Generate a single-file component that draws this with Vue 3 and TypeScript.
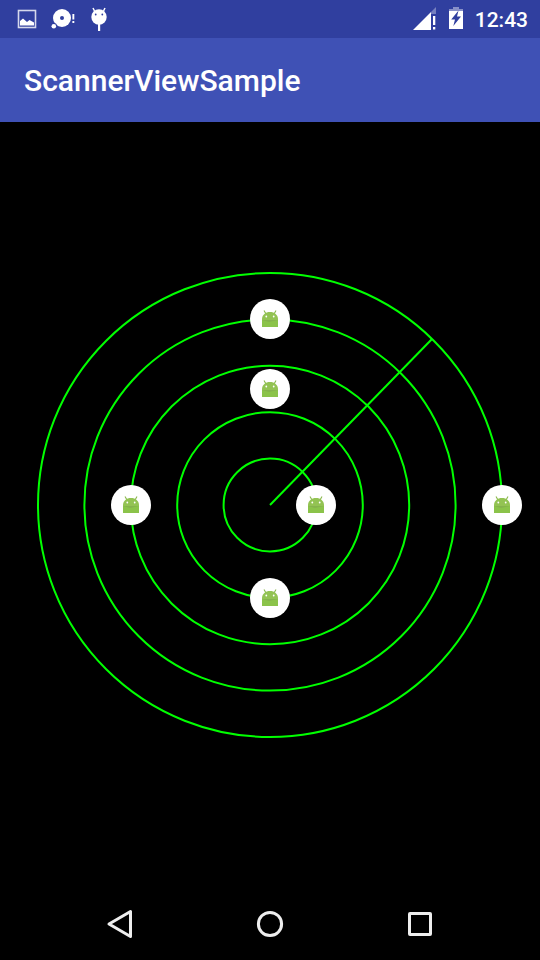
<script setup lang="ts">
interface Marker {
  x: number
  y: number
}

const center = 270
const maxRadius = 232
const ringCount = 5

const rings: number[] = Array.from({ length: ringCount }, (_, i) => (maxRadius * (i + 1)) / ringCount)

const markers: Marker[] = [
  { x: 270, y: 84 },
  { x: 270, y: 154 },
  { x: 131, y: 270 },
  { x: 316, y: 270 },
  { x: 502, y: 270 },
  { x: 270, y: 363 },
]
</script>

<template>
  <div class="screen">
    <div class="status">
      <div class="notifications">
        <svg width="20" height="20" viewBox="0 0 20 20" aria-hidden="true">
          <rect x="1.5" y="1.5" width="17" height="17" fill="none" stroke="#d5d8ec" stroke-width="1.6" />
          <path d="M3 16.500V12l3-2.500 4 3.500 2.500-2 4.500 2.500v3z" fill="#fff" />
        </svg>
        <svg width="24" height="20" viewBox="0 0 24 20" aria-hidden="true">
          <circle cx="11" cy="9" r="9" fill="#fff" />
          <circle cx="11" cy="9" r="2" fill="#303f9f" />
          <circle cx="2.8" cy="17.2" r="3.2" fill="#303f9f" />
          <circle cx="2.8" cy="17.2" r="2.3" fill="#fff" />
          <path d="M21.4 5h1.9v5.500h-1.900zM21.400 12h1.900v2h-1.900z" fill="#fff" />
        </svg>
        <svg width="20" height="24" viewBox="-1 0 20 24" aria-hidden="true">
          <path d="M4.500 4 3 1M13.500 4 15 1" fill="none" stroke="#fff" stroke-width="1.500" />
          <path d="M8 16h2.200v8H8z" fill="#fff" />
          <circle cx="9" cy="10" r="7.700" fill="#fff" />
          <circle cx="5.700" cy="7.500" r="0.900" fill="#303f9f" />
          <circle cx="12.300" cy="7.500" r="0.900" fill="#303f9f" />
        </svg>
      </div>
      <div class="system">
        <svg width="24" height="24" viewBox="0 0 24 24" aria-hidden="true">
          <path d="M23 0v7h-5V5z" fill="#7680bf" />
          <path d="M0 23 18 5v18z" fill="#fff" />
          <path d="M20 9h2.300v9H20zM20 20h2.300v2.500H20z" fill="#fff" />
        </svg>
        <svg width="16" height="24" viewBox="0 0 16 24" aria-hidden="true">
          <path d="M1 4V2h4V0h6v2h4v2z" fill="#8890c8" />
          <path d="M1 4h14v18H1z" fill="#fff" />
          <path d="M10.500 3.500 3.200 12.500h3.800L5.300 19 13 9.500H9z" fill="#303f9f" />
        </svg>
        <time>12:43</time>
      </div>
    </div>

    <header class="toolbar">
      <h1>ScannerViewSample</h1>
    </header>

    <main class="scanner">
      <svg class="radar" viewBox="0 0 540 540" role="img" aria-label="Scanner">
        <defs>
          <g id="robot">
            <circle r="20" fill="#fff" />
            <path d="M-4-5-6-8.500M4-5 6-8.500" fill="none" stroke="#8bb84f" stroke-width="1.100" />
            <path d="M-8 1V0C-7.800-4.300-4.500-7 0-7S7.800-4.300 8 0v1z" fill="#93c353" />
            <path d="M-8 1H8V8H-8z" fill="#8bc34a" />
            <path d="M-8 1H8L-1 3z" fill="#85b34d" />
            <circle cx="-3.700" cy="-2.500" r="0.900" fill="#fff" />
            <circle cx="3.700" cy="-2.500" r="0.900" fill="#fff" />
          </g>
        </defs>
        <g fill="none" stroke="#0f0" stroke-width="2">
          <circle v-for="radius in rings" :key="radius" :cx="center" :cy="center" :r="radius" />
          <line :x1="center" :y1="center" x2="432" y2="104" />
        </g>
        <use v-for="(m, i) in markers" :key="i" href="#robot" :x="m.x" :y="m.y" />
      </svg>
    </main>

    <nav class="navbar">
      <button type="button" aria-label="Back">
        <svg width="32" height="32" viewBox="0 0 32 32">
          <path d="M5 16 26.500 3.500v25z" />
        </svg>
      </button>
      <button type="button" aria-label="Home">
        <svg width="32" height="32" viewBox="0 0 32 32">
          <circle cx="16" cy="16" r="11.600" />
        </svg>
      </button>
      <button type="button" aria-label="Overview">
        <svg width="32" height="32" viewBox="0 0 32 32">
          <rect x="5.500" y="5.500" width="21" height="21" rx="0.500" />
        </svg>
      </button>
    </nav>
  </div>
</template>

<style>
body {
  margin: 0;
  background: #000;
}
</style>

<style scoped>
.screen {
  display: flex;
  flex-direction: column;
  min-height: 100vh;
  background: #000;
  color: #fff;
  font-family: Roboto, "Noto Sans", sans-serif;
  font-weight: 500;
}

.status {
  display: flex;
  align-items: center;
  justify-content: space-between;
  height: 38px;
  padding: 0 12px 0 17px;
  background: #303f9f;
}

.notifications {
  display: flex;
  align-items: center;
  gap: 14px;
}

.system {
  display: flex;
  align-items: center;
  gap: 11px;
}

.status svg {
  display: block;
}

time {
  padding-top: 2px;
  font-size: 21px;
  line-height: 36px;
}

.toolbar {
  display: flex;
  align-items: center;
  box-sizing: border-box;
  height: 84px;
  padding: 2px 24px 0;
  background: #3f51b5;
}

h1 {
  margin: 0;
  font-size: 30px;
  line-height: 36px;
  font-weight: 500;
}

.scanner {
  display: flex;
  flex: 1;
  align-items: center;
  justify-content: center;
}

.radar {
  display: block;
  width: 100%;
}

.navbar {
  display: flex;
  justify-content: center;
  height: 72px;
}

.navbar button {
  display: flex;
  flex: 0 1 150px;
  align-items: center;
  justify-content: center;
  padding: 0;
  border: 0;
  background: none;
}

.navbar svg {
  fill: none;
  stroke: #eee;
  stroke-width: 3;
  stroke-linejoin: round;
}
</style>
